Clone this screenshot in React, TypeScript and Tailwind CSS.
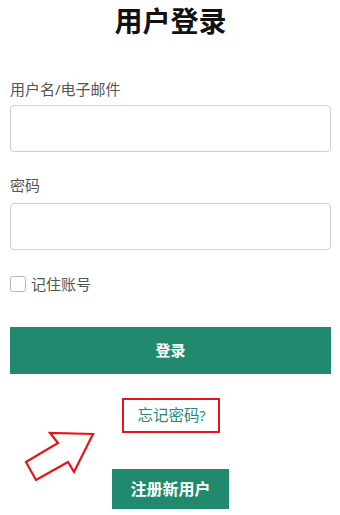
export default function App() {
  return (
    <div
      className="relative h-[515px] w-[340px] overflow-hidden bg-white"
      style={{ fontFamily: '"Noto Sans", "Noto Sans CJK SC", sans-serif' }}
    >
      <div className="pl-[10px] pr-[9px]">
        <h1 className="pt-[4px] text-center text-[28px] font-bold leading-[34px] text-[#111]">
          用户登录
        </h1>

        <label className="mt-[41px] block text-[15px] leading-[20px] text-[#555]">
          用户名/电子邮件
        </label>
        <input
          type="text"
          className="mt-[6px] block h-[47px] w-full rounded-[4px] border border-[#cfcfd3] bg-white px-3 outline-none"
        />

        <label className="mt-[23px] block text-[15px] leading-[20px] text-[#555]">
          密码
        </label>
        <input
          type="password"
          className="mt-[8px] block h-[47px] w-full rounded-[4px] border border-[#cfcfd3] bg-white px-3 outline-none"
        />

        <label className="mt-[24px] flex h-[20px] items-center gap-[5px]">
          <span className="block h-[16px] w-[16px] rounded-[3px] border border-[#b5b5b5] bg-white" />
          <span className="text-[15px] leading-[20px] text-[#555]">记住账号</span>
        </label>

        <button className="mt-[33px] flex h-[47px] w-full items-center justify-center bg-[#21896d] text-[15px] font-bold text-white">
          登录
        </button>

        <div className="mt-[24px] flex justify-center">
          <a className="flex h-[35px] w-[98px] items-center border-2 border-[#e5151c] pl-[14px] text-[15.5px] leading-none text-[#1f8a7a]">
            忘记密码<span className="text-[14px]">?</span>
          </a>
        </div>

        <div className="mt-[36px] flex justify-center">
          <button className="flex h-[40px] w-[117px] items-center justify-center bg-[#21896d] text-[16px] font-bold text-white">
            注册新用户
          </button>
        </div>
      </div>

      <svg
        className="absolute left-0 top-0"
        width="120"
        height="500"
        viewBox="0 0 120 500"
      >
        <polygon
          points="93,434 50,433 58,443 26,462 36,480 68,462 74,472"
          fill="white"
          stroke="#e5151c"
          strokeWidth="2.2"
          strokeLinejoin="miter"
        />
      </svg>
    </div>
  )
}
